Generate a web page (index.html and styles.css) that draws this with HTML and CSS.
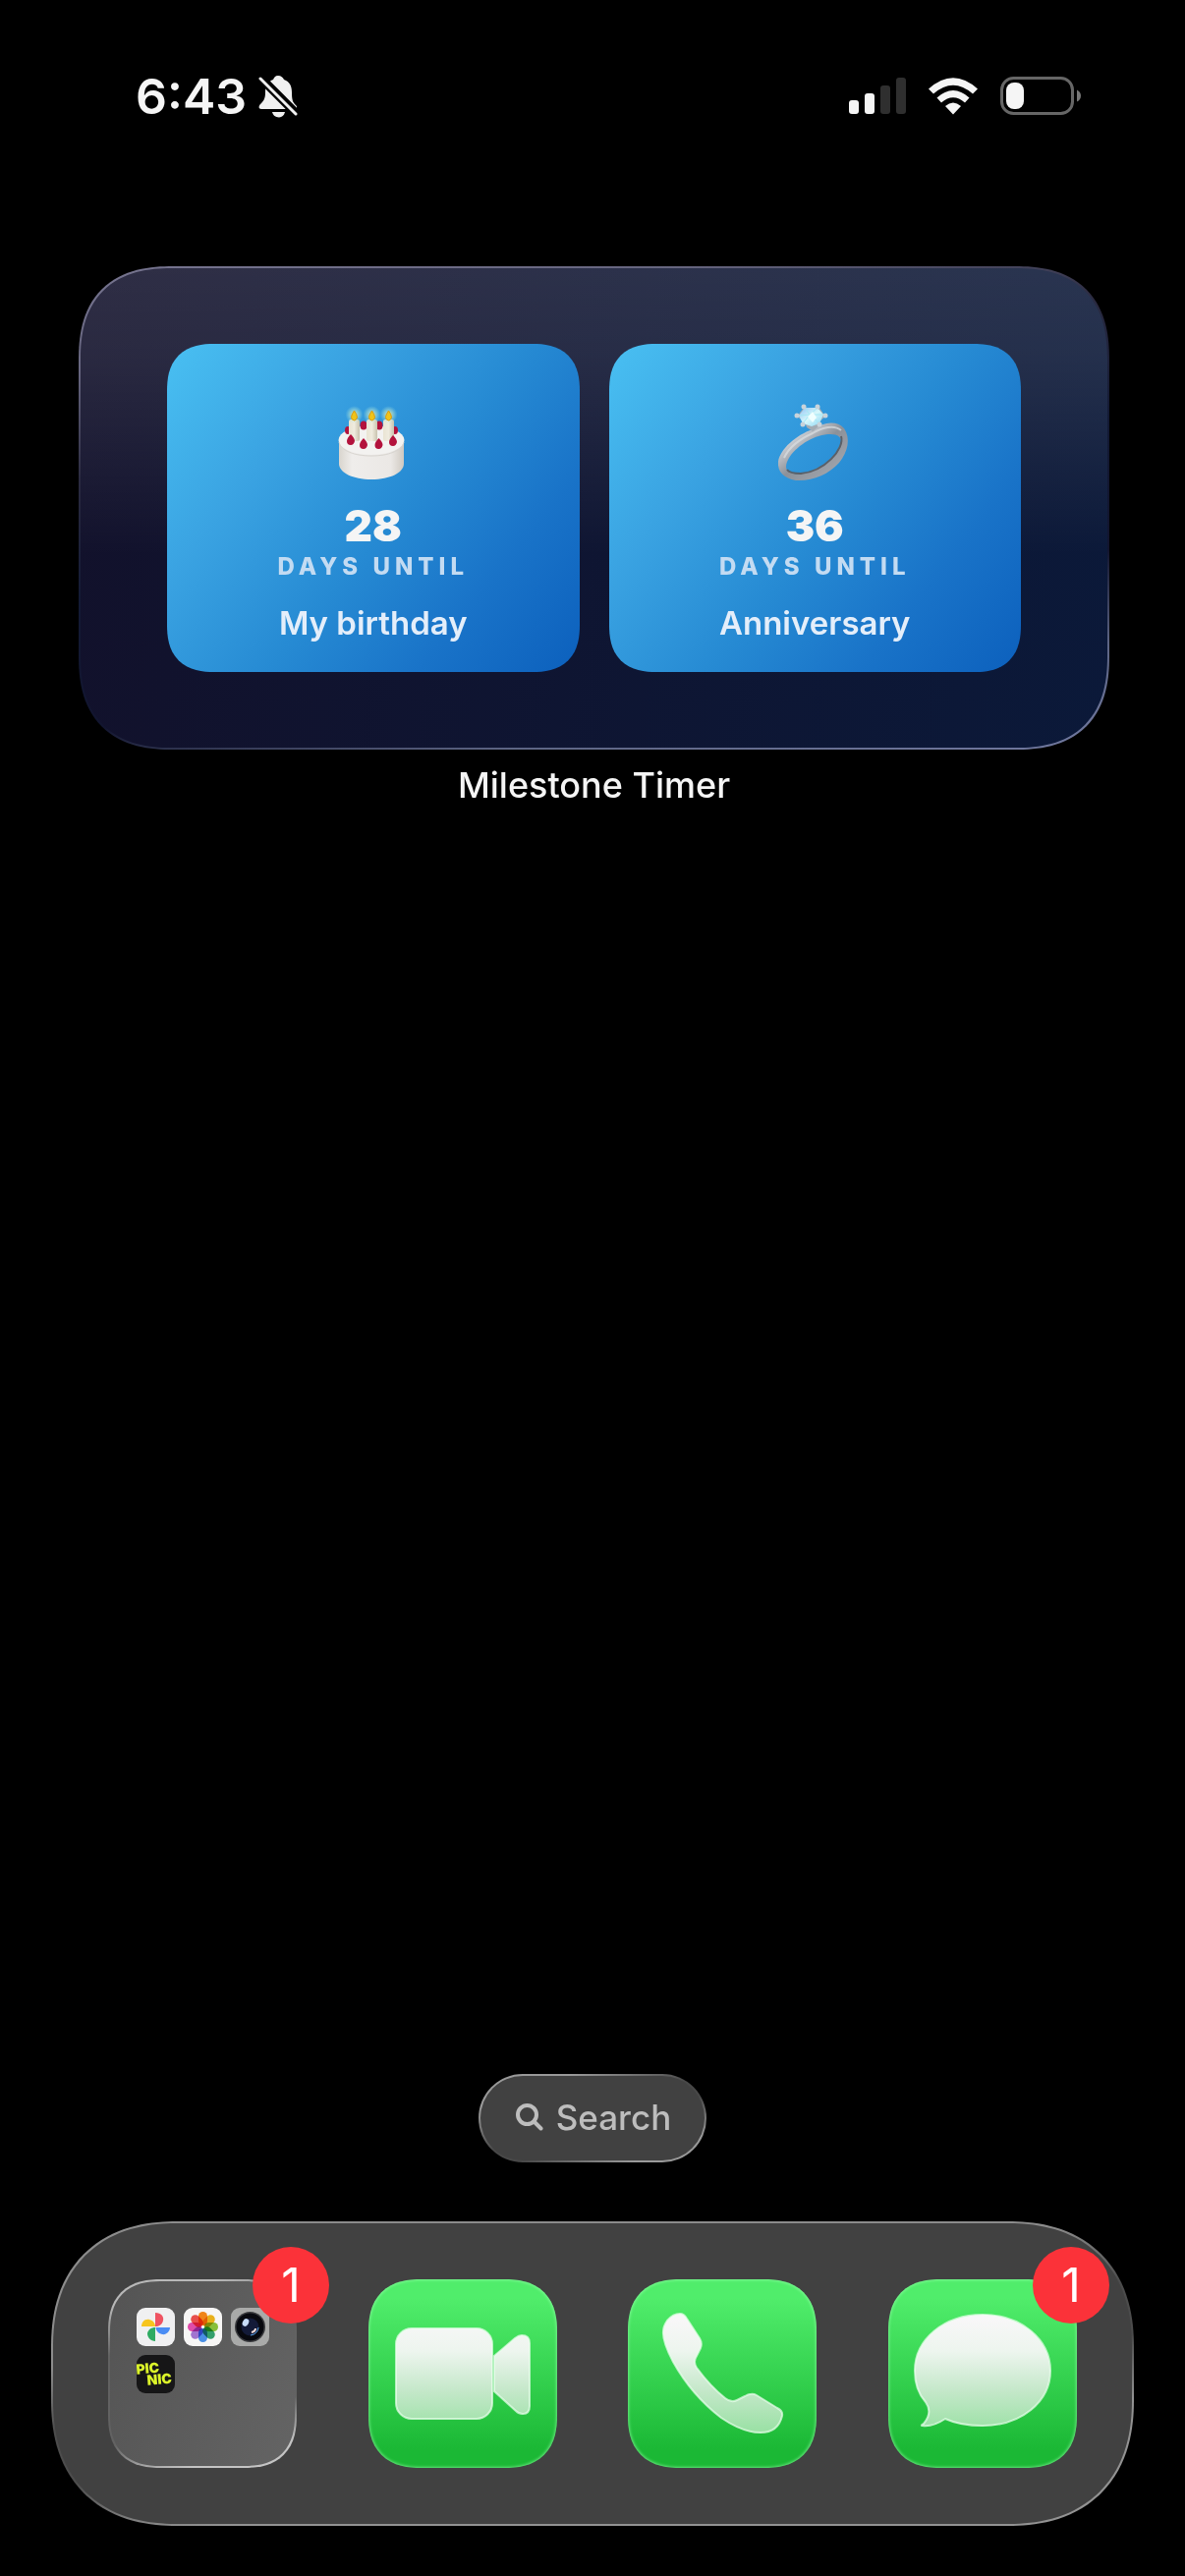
FILE: index.html
```html
<!DOCTYPE html>
<html lang="en">
<head>
<meta charset="utf-8">
<meta name="viewport" content="width=device-width, initial-scale=1">
<title>Home Screen</title>
<link rel="stylesheet" href="styles.css">
</head>
<body>
<header class="status">
  <div class="status-left">
    <time class="clock">6:43</time>
    <svg class="bell" viewBox="0 0 40 44" role="img" aria-label="Silent mode">
      <path d="M20 1c3 0 5 2 6 4 6 2 8 7 8 13 0 8 1 10 4 13 2 2 1 4-1 4H3c-3 0-3-3-1-5 3-3 5-5 5-12 0-7 3-11 8-13 1-2 2-4 5-4Z"/>
      <path d="M14 38h13c-1 4-3 5-6 5.500-4-.500-6-2-7-5.500Z"/>
      <path class="bell-gap" d="M-1 0 42 43"/>
      <path class="bell-slash" d="M2 4 38 40"/>
    </svg>
  </div>
  <div class="status-right">
    <svg class="signal" viewBox="0 0 58 38" role="img" aria-label="Signal, two of four bars">
      <rect x="0" y="23" width="10" height="14" rx="3"/>
      <rect x="16" y="16" width="10" height="21" rx="3"/>
      <rect class="off" x="32" y="8" width="10" height="29" rx="3"/>
      <rect class="off" x="48" y="0" width="10" height="37" rx="3"/>
    </svg>
    <svg class="wifi" viewBox="0 0 52 38" role="img" aria-label="Wi-Fi">
      <path d="M26 37.500 18 29q8-7 16 0Z"/>
      <path d="M9.500 20.500q16.500-15 33 0l-4.500 5q-12-10.500-24 0Z"/>
      <path d="M1 11.500q25-22.500 50 0l-5 5q-20-17.500-40 0Z"/>
    </svg>
    <svg class="battery" viewBox="0 0 84 40" role="img" aria-label="Battery low">
      <rect class="shell" x="1.500" y="1.500" width="72" height="36" rx="12"/>
      <rect x="6" y="6" width="18" height="27" rx="8"/>
      <path class="nub" d="M78 13.500q4 2 4 6t-4 6Z"/>
    </svg>
  </div>
</header>

<main class="home">
  <section class="widget" aria-labelledby="widget-name">
    <article class="card">
      <svg class="emoji" viewBox="0 0 76 80" aria-hidden="true">
        <defs>
          <linearGradient id="cake" x2="1"><stop offset="0" stop-color="#d9d5ce"/><stop offset=".2" stop-color="#efedeb"/><stop offset=".8" stop-color="#ebe8e5"/><stop offset="1" stop-color="#cfc9c1"/></linearGradient>
          <linearGradient id="wax" x2="1"><stop offset="0" stop-color="#e9e4d3"/><stop offset=".5" stop-color="#efebde"/><stop offset="1" stop-color="#c9c3ae"/></linearGradient>
          <radialGradient id="glow"><stop offset="0" stop-color="#fff2a0" stop-opacity=".9"/><stop offset=".6" stop-color="#c8f0d0" stop-opacity=".4"/><stop offset="1" stop-color="#9fe6e6" stop-opacity="0"/></radialGradient>
        </defs>
        <path d="M3 38v24c0 9 14 16 33 16s33-7 33-16V38Z" fill="url(#cake)"/>
        <ellipse cx="36" cy="38" rx="33.500" ry="15" fill="#f3f2f0"/>
        <path d="M3 40c2 9 16 14 33 14s31-5 33-14" fill="none" stroke="#d8d5d0"/>
        <g fill="#b3123c"><ellipse cx="28" cy="23" rx="3.500" ry="4.500"/><ellipse cx="44" cy="23" rx="3.500" ry="4.500"/><ellipse cx="12" cy="28" rx="3" ry="4"/><ellipse cx="60" cy="28" rx="3" ry="4"/></g>
        <g fill="url(#wax)"><rect x="13" y="17" width="11" height="22" rx="2"/><rect x="31" y="17" width="11" height="22" rx="2"/><rect x="48" y="17" width="11" height="22" rx="2"/></g>
        <g fill="url(#glow)"><circle cx="18.500" cy="12" r="9"/><circle cx="36.500" cy="12" r="9"/><circle cx="53.500" cy="12" r="9"/></g>
        <g fill="#f0c419" stroke="#d99b12"><path d="M18.500 8q3 4 3 7-1 3-3 3-3-.500-3-3.500 0-2 3-6.500Z"/><path d="M36.500 8q3 4 3 7-1 3-3 3-3-.500-3-3.500 0-2 3-6.500Z"/><path d="M53.500 8q3 4 3 7-1 3-3 3-3-.500-3-3.500 0-2 3-6.500Z"/></g>
        <g fill="#b3123c"><path d="M15 32q4 4 4 7-1 4-4 4-4 0-4-4 0-3 4-7ZM28 36q4 4 4 7-1 4-4 4-4 0-4-4 0-3 4-7ZM43.500 36q4 4 4 7-1 4-4 4-4 0-4-4 0-3 4-7ZM58 33q4 4 4 7-1 4-4 4-4 0-4-4 0-3 4-7Z"/></g>
      </svg>
      <strong class="count">28</strong>
      <span class="unit">DAYS UNTIL</span>
      <span class="event">My birthday</span>
    </article>
    <article class="card">
      <svg class="emoji" viewBox="0 0 76 80" aria-hidden="true">
        <defs>
          <linearGradient id="band" x1="0" y1="0" x2="1" y2="1"><stop offset="0" stop-color="#8d9299"/><stop offset=".25" stop-color="#c9cdd3"/><stop offset=".5" stop-color="#8c9199"/><stop offset="1" stop-color="#a9adb5"/></linearGradient>
          <linearGradient id="gem" x2="1" y2="1"><stop offset="0" stop-color="#8fc4f5"/><stop offset=".5" stop-color="#d9f8fb"/><stop offset="1" stop-color="#86d4f4"/></linearGradient>
        </defs>
        <path fill="url(#band)" fill-rule="evenodd" d="M36 27C48 19 61 18 68 26C75 36 72 50 63 61C52 73 36 80 19 79C7 77 0 70 1 60C3 47 19 33 36 27ZM42 34C28 38 10 52 9 65C9 71 16 73 24 72C42 70 60 55 65 42C67 32 56 30 42 34Z"/>
        <path fill="none" stroke="#5a6068" stroke-width="2" d="M65 34C69 47 48 70 24 72C18 72 12 71 10 68"/>
        <path fill="none" stroke="#dcdfe3" stroke-width="2" opacity=".7" d="M7 56C12 45 25 36 36 31C46 25 58 22 65 28"/>
        <path d="M20 14q9 5 10 11l6 4 5-4q1-6 8-11l-6-9H27Z" fill="#a3abb3"/>
        <path d="M28 5h13l6 7-4 9-8 3-9-3-4-8Z" fill="url(#gem)"/>
        <path d="m28 5 5 7 8-7M22 13l11-1 14 0M26 21l7-9 10 9" fill="none" stroke="#a4e8f4" stroke-width="1"/>
        <path d="m31 14 5-5 4 6-4 5Z" fill="#f0ffff"/>
        <g fill="#c9d3da"><circle cx="27" cy="4" r="2.500"/><circle cx="41" cy="4" r="2.500"/><circle cx="20" cy="13" r="2.500"/><circle cx="49" cy="13" r="2.500"/><circle cx="26" cy="22" r="2.500"/><circle cx="43" cy="22" r="2.500"/></g>
      </svg>
      <strong class="count">36</strong>
      <span class="unit">DAYS UNTIL</span>
      <span class="event">Anniversary</span>
    </article>
  </section>
  <h1 class="widget-name" id="widget-name">Milestone Timer</h1>
</main>

<footer class="bottom">
  <button class="search" type="button">
    <svg class="glass" viewBox="0 0 28 28" aria-hidden="true"><circle cx="11.500" cy="11.500" r="9.500"/><path d="m19 19 6.500 6.500"/></svg>
    Search
  </button>
  <nav class="dock" aria-label="Dock">
    <button class="app folder" type="button" aria-label="Folder, 1 notification">
      <svg class="mini" viewBox="0 0 39 39" aria-hidden="true">
        <rect width="39" height="39" rx="9" fill="#f0f0f1"/>
        <path d="M19 5c6 0 9 4 8 8-1 4-4 6-8 6Z" fill="#ef5362"/>
        <path d="M5 19c0-4 3-8 8-7 4 1 6 4 6 7Z" fill="#f7c51e"/>
        <path d="M19.500 20H34c0 4-4 8-8 7-4-1-6.500-4-6.500-7Z" fill="#4a8cf4"/>
        <path d="M19 20v14c-5 0-8-4-8-8 1-4 4-6 8-6Z" fill="#2fab62"/>
      </svg>
      <svg class="mini" viewBox="0 0 39 39" aria-hidden="true">
        <rect width="39" height="39" rx="9" fill="#f7f6f5"/>
        <g class="petals">
          <rect x="15" y="4" width="9" height="14" rx="4.500" fill="#f88a17"/>
          <rect x="15" y="4" width="9" height="14" rx="4.500" fill="#f0b71c" transform="rotate(45 19.500 19.500)"/>
          <rect x="15" y="4" width="9" height="14" rx="4.500" fill="#8cc63c" transform="rotate(90 19.500 19.500)"/>
          <rect x="15" y="4" width="9" height="14" rx="4.500" fill="#35a56f" transform="rotate(135 19.500 19.500)"/>
          <rect x="15" y="4" width="9" height="14" rx="4.500" fill="#4b94ee" transform="rotate(180 19.500 19.500)"/>
          <rect x="15" y="4" width="9" height="14" rx="4.500" fill="#a678d8" transform="rotate(225 19.500 19.500)"/>
          <rect x="15" y="4" width="9" height="14" rx="4.500" fill="#e64fb0" transform="rotate(270 19.500 19.500)"/>
          <rect x="15" y="4" width="9" height="14" rx="4.500" fill="#f0524e" transform="rotate(315 19.500 19.500)"/>
        </g>
      </svg>
      <svg class="mini" viewBox="0 0 39 39" aria-hidden="true">
        <rect width="39" height="39" rx="9" fill="#a9aaa9"/>
        <circle cx="19.500" cy="19.500" r="15.500" fill="#3a3b3e"/>
        <circle cx="19.500" cy="19.500" r="14" fill="#08090f"/>
        <circle cx="19.500" cy="19.500" r="9" fill="#131a38"/>
        <ellipse cx="15" cy="15" rx="3" ry="4" fill="#c7dcf7" transform="rotate(30 15 15)"/>
        <path d="M20 28q7-1 8-8" fill="none" stroke="#5aa2e8" stroke-width="1"/>
        <path d="M21 25q4-1 4-4" fill="none" stroke="#f0dcd8" stroke-width="2"/>
      </svg>
      <svg class="mini" viewBox="0 0 39 39" role="img" aria-label="Picnic">
        <rect width="39" height="39" rx="9" fill="#161617"/>
        <g class="picnic" transform="rotate(-5 19 20)"><text x="0" y="18">PIC</text><text x="10" y="30">NIC</text></g>
      </svg>
      <span class="badge">1</span>
    </button>
    <button class="app green" type="button" aria-label="FaceTime">
      <svg class="glyph" viewBox="0 0 192 192" aria-hidden="true">
        <defs><linearGradient id="frost" x1="0" y1="40" x2="0" y2="152" gradientUnits="userSpaceOnUse"><stop offset="0" stop-color="#f8f7f8"/><stop offset=".3" stop-color="#edf5ee"/><stop offset=".65" stop-color="#c5e8ca"/><stop offset="1" stop-color="#9de1a7"/></linearGradient></defs>
        <rect x="28" y="50" width="98" height="92" rx="16"/>
        <path d="M128 78 149 60Q153 57 156 57 164 57 164 65V129Q164 137 157 137 153 137 150 134L128 114Z"/>
      </svg>
    </button>
    <button class="app green" type="button" aria-label="Phone">
      <svg class="glyph" viewBox="0 0 192 192" aria-hidden="true">
        <path d="M40 42Q46 35 53 35 57 35 60 40L73 60Q76 65 74 70L70 78Q66 84 70 90 84 109 99 121 105 126 111 123L119 119Q126 115 131 118L152 131Q158 134 157 139 153 156 135 156 117 156 95 141 65 118 46 84 35 63 36 53 36 48 40 42Z"/>
      </svg>
    </button>
    <button class="app green" type="button" aria-label="Messages, 1 notification">
      <svg class="glyph" viewBox="0 0 192 192" aria-hidden="true">
        <path d="M96 36C135 36 165 61 165 93S135 149 96 149C82 149 69 147 58 142 52 146 43 150 35 149 33 149 34 148 36 147 42 140 43 132 38 125 30 116 27 105 27 93 27 61 57 36 96 36Z"/>
      </svg>
      <span class="badge">1</span>
    </button>
  </nav>
</footer>
</body>
</html>
```
FILE: styles.css
```css
* { box-sizing: border-box; }

body {
  margin: 0;
  min-height: 100vh;
  display: flex;
  flex-direction: column;
  background: #000;
  color: #f5f5f5;
  font-family: Inter, "Liberation Sans", sans-serif;
}

button {
  border: 0;
  margin: 0;
  padding: 0;
  font: inherit;
  color: inherit;
  cursor: pointer;
}

svg { display: block; flex: none; }

/* Status bar */
.status {
  display: flex;
  justify-content: space-between;
  align-items: center;
  padding: 76px 104px 0 138px;
}
.status-left, .status-right { display: flex; align-items: center; }
.status-left { gap: 12px; }
.status-right { gap: 22px; fill: #f5f5f5; }
.clock { font-size: 50px; line-height: 44px; font-weight: 600; }
.bell { width: 40px; height: 44px; fill: #f0f0f0; }
.bell-gap { stroke: #000; stroke-width: 9; }
.bell-slash { stroke: #f0f0f0; stroke-width: 3; stroke-linecap: round; }
.signal { width: 58px; height: 38px; }
.off { fill: #2f2f2f; }
.wifi { width: 52px; height: 38px; }
.battery { width: 84px; height: 40px; }
.shell { fill: none; stroke: #666; stroke-width: 3; }
.nub { fill: #777; }

/* Widget */
.home {
  flex: 1;
  padding: 151px 77px 0 80px;
}
.widget {
  display: flex;
  gap: 30px;
  padding: 77px 88px;
  border: 2px solid transparent;
  border-radius: 96px;
  corner-shape: superellipse(1.3);
  background:
    linear-gradient(to bottom, rgb(255 255 255 / .12), rgb(255 255 255 / .1) 18%, rgb(255 255 255 / 0) 60%) padding-box,
    linear-gradient(100deg, #12112b, #0b1939) padding-box,
    linear-gradient(170deg, #777590 0, #66657f 16%, #2a2a40 32%, #131a35 50%, #12152f 70%, #5d6584 84%, #7179a0) border-box;
}
.card {
  flex: 1;
  display: flex;
  flex-direction: column;
  align-items: center;
  padding: 60px 0 30px;
  border-radius: 48px;
  corner-shape: superellipse(1.3);
  background: linear-gradient(129deg, #49c0f2, #3aa3e2 28%, #268ad3 54%, #1973c8 76%, #0c60bd);
}
.emoji { width: 76px; height: 80px; margin-bottom: 23px; }
.count { font-size: 44px; line-height: 44px; font-weight: 900; }
.unit {
  margin: 6px 0 23px;
  font-size: 24px;
  line-height: 28px;
  font-weight: 800;
  letter-spacing: 5px;
  color: #c3dbf2;
}
.event { font-size: 33px; line-height: 40px; font-weight: 600; color: #e4eefa; }
.widget-name {
  margin: 14px 0 0;
  font-size: 36px;
  line-height: 44px;
  font-weight: 500;
  text-align: center;
}

/* Search and dock */
.bottom {
  display: flex;
  flex-direction: column;
  align-items: center;
  gap: 60px;
  padding: 0 52px 51px;
}
.search {
  display: flex;
  align-items: center;
  gap: 13px;
  padding: 20px 34px 22px 36px;
  border: 2px solid transparent;
  border-radius: 45px;
  background:
    linear-gradient(#414141, #414141) padding-box,
    linear-gradient(160deg, #999 20%, #484848 48%, #484848 60%, #999 84%) border-box;
  color: #bdbdbd;
  font-size: 35px;
  line-height: 44px;
  font-weight: 500;
}
.glass { width: 28px; height: 28px; fill: none; stroke: #bdbdbd; stroke-width: 4; stroke-linecap: round; }
.dock {
  align-self: stretch;
  display: flex;
  justify-content: space-between;
  padding: 57px 56px;
  border: 2px solid transparent;
  border-radius: 128px;
  corner-shape: superellipse(1.2);
  background:
    linear-gradient(#414141, #414141) padding-box,
    linear-gradient(172deg, #8c8c8c 32%, #4c4c4c 46%, #4c4c4c 58%, #929292 72%) border-box;
}
.app {
  position: relative;
  width: 192px;
  height: 192px;
  border-radius: 54px;
  corner-shape: superellipse(1.3);
}
.folder {
  display: grid;
  grid-template-columns: repeat(3, 39px);
  align-content: start;
  gap: 9px;
  padding: 27px;
  border: 2px solid transparent;
  background:
    linear-gradient(110deg, #545454, #646464) padding-box,
    linear-gradient(165deg, #b8b8b8 12%, #626262 32%, #626262 70%, #c4c4c4 88%) border-box;
}
.green {
  background: linear-gradient(#50ed6b 10%, #1bb835 90%);
  box-shadow: inset 0 0 3px 1px rgb(150 255 170 / .6);
}
.glyph { width: 192px; height: 192px; fill: url(#frost); stroke: rgb(235 255 238 / .7); stroke-width: 2; }
.mini { width: 39px; height: 39px; }
.petals { mix-blend-mode: multiply; }
.petals rect { mix-blend-mode: multiply; }
.picnic { fill: #dcf52a; font-size: 14px; font-weight: 900; }
.badge {
  position: absolute;
  top: -33px;
  right: -33px;
  width: 78px;
  height: 78px;
  border-radius: 50%;
  background: #fb3239;
  color: #fff;
  font-size: 48px;
  line-height: 78px;
  text-align: center;
}
.folder .badge { top: -35px; right: -35px; }
```
